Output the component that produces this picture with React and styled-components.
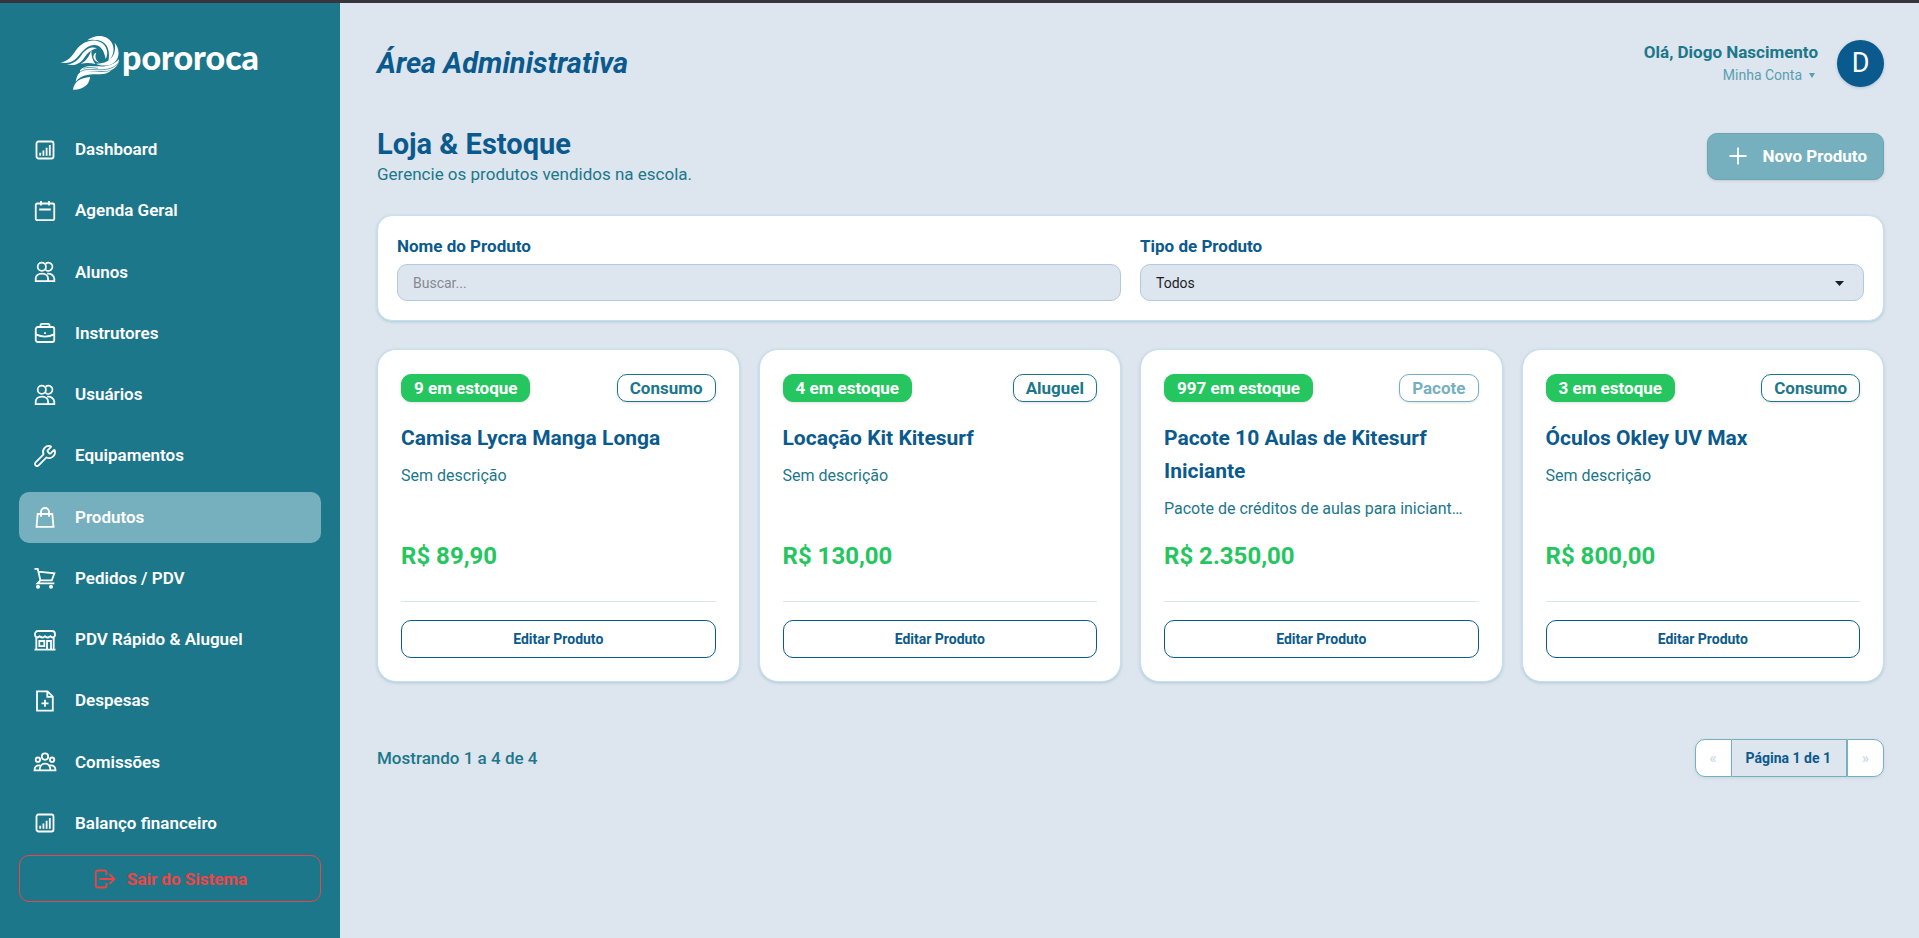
import React, { useState } from "react";
import styled, { createGlobalStyle } from "styled-components";
import { Wrench } from "lucide-react";

const colors = {
  navy: "#0b5a8d",
  teal: "#1c778b",
  aqua: "#76b0bf",
  ice: "#dde5ee",
  line: "#c3e1ee",
  green: "#25c65f",
  red: "#ef4444"
};

const GlobalStyle = createGlobalStyle`
  * {
    box-sizing: border-box;
  }
  body {
    margin: 0;
    background: ${colors.ice};
    font-family: Roboto, "Liberation Sans", sans-serif;
    font-size: 17px;
    line-height: 27px;
    color: ${colors.teal};
  }
  h1, h2, h3, p {
    margin: 0;
  }
  button, input, select {
    font-family: inherit;
  }
`;

const Page = styled.div`
  display: flex;
  min-height: 100vh;
  border-top: 3px solid #37353b;
`;

const Sidebar = styled.aside`
  display: flex;
  flex-direction: column;
  flex: 0 0 340px;
  padding: 32px 19px 36px;
  background: ${colors.teal};
`;

const Brand = styled.a`
  display: flex;
  align-items: flex-start;
  gap: 2px;
  height: 58px;
  margin: 0 38px 31px 41px;
  color: #fff;
  text-decoration: none;
`;

const BrandName = styled.span`
  font-family: Lato, sans-serif;
  font-size: 34px;
  font-weight: 900;
  line-height: 44px;
`;

const Nav = styled.nav`
  display: flex;
  flex: 1;
  flex-direction: column;
  justify-content: space-between;
  margin-bottom: 6px;
`;

const NavLink = styled.a`
  display: flex;
  align-items: center;
  gap: 18px;
  height: 51px;
  padding: 0 14px;
  border-radius: 10px;
  background: ${props => (props.$active ? colors.aqua : "transparent")};
  color: #fff;
  font-weight: 600;
  text-decoration: none;
`;

const LogoutButton = styled.button`
  display: flex;
  align-items: center;
  justify-content: center;
  gap: 10px;
  height: 47px;
  border: 1px solid ${colors.red};
  border-radius: 10px;
  background: transparent;
  color: ${colors.red};
  font-size: 17px;
  font-weight: 700;
`;

const Main = styled.main`
  flex: 1;
  min-width: 0;
  padding: 37px 35px 37px 37px;
`;

const Header = styled.header`
  display: flex;
  align-items: center;
  justify-content: space-between;
  height: 47px;
`;

const AreaTitle = styled.h1`
  color: ${colors.navy};
  font-size: 29px;
  font-style: italic;
  font-weight: 700;
  line-height: 35px;
`;

const Account = styled.div`
  display: flex;
  align-items: center;
  gap: 19px;
`;

const AccountText = styled.div`
  display: flex;
  flex-direction: column;
  align-items: flex-end;
`;

const Greeting = styled.strong`
  font-weight: 700;
  line-height: 24px;
`;

const AccountButton = styled.button`
  display: flex;
  align-items: center;
  gap: 7px;
  padding: 0 3px;
  border: 0;
  background: none;
  color: #5a9fb0;
  font-size: 14px;
  line-height: 23px;
`;

const Avatar = styled.div`
  display: flex;
  align-items: center;
  justify-content: center;
  width: 47px;
  height: 47px;
  border-radius: 50%;
  background: ${colors.navy};
  box-shadow: 0 1px 3px rgba(11, 90, 141, 0.25);
  color: #fff;
  font-size: 27px;
`;

const PageHead = styled.div`
  display: flex;
  align-items: center;
  justify-content: space-between;
  margin: 39px 0 29px;
`;

const PageTitle = styled.h2`
  color: ${colors.navy};
  font-size: 29px;
  font-weight: 700;
  line-height: 37px;
`;

const PageSubtitle = styled.p`
  line-height: 23px;
`;

const NewButton = styled.button`
  display: flex;
  align-items: center;
  gap: 12px;
  height: 47px;
  padding: 0 16px 0 18px;
  border: 1px solid #6ba5b4;
  border-radius: 10px;
  background: ${colors.aqua};
  box-shadow: 0 1px 3px rgba(0, 0, 0, 0.12);
  color: #fff;
  font-size: 17px;
  font-weight: 700;
`;

const Panel = styled.section`
  border: 1px solid ${colors.line};
  background: #fff;
  box-shadow: 0 1px 3px rgba(28, 119, 139, 0.25);
`;

const Filters = styled(Panel)`
  display: grid;
  grid-template-columns: 1fr 1fr;
  gap: 19px;
  padding: 17px 19px 19px;
  border-radius: 15px;
`;

const Field = styled.div`
  position: relative;
`;

const Label = styled.label`
  display: block;
  margin-bottom: 4px;
  color: ${colors.navy};
  font-weight: 700;
`;

const Input = styled.input`
  display: block;
  width: 100%;
  height: 37px;
  padding: 0 15px;
  border: 1px solid #b3cadd;
  border-radius: 10px;
  background: ${colors.ice};
  color: #1d1d26;
  font-size: 14px;
  &::placeholder {
    color: #858a92;
  }
`;

const Select = styled(Input)`
  appearance: none;
`;

const SelectArrow = styled.svg`
  position: absolute;
  right: 20px;
  bottom: 15px;
  pointer-events: none;
`;

const Products = styled.div`
  display: grid;
  grid-template-columns: repeat(4, 1fr);
  gap: 19px;
  margin-top: 28px;
`;

const ProductCard = styled(Panel)`
  display: flex;
  flex-direction: column;
  min-width: 0;
  padding: 24px 23px 23px;
  border-radius: 19px;
`;

const Badges = styled.div`
  display: flex;
  justify-content: space-between;
  margin-bottom: 20px;
`;

const Badge = styled.span`
  height: 28px;
  padding: 0 12px;
  border: 1px solid ${props => props.$color};
  border-radius: 10px;
  background: ${props => (props.$filled ? props.$color : "#fff")};
  box-shadow: 0 1px 3px rgba(0, 0, 0, 0.12);
  color: ${props => (props.$filled ? "#fff" : props.$color)};
  font-weight: 700;
  line-height: 26px;
`;

const ProductName = styled.h3`
  margin-bottom: 7px;
  color: ${colors.navy};
  font-size: 21px;
  font-weight: 700;
  line-height: 33px;
`;

const Description = styled.p`
  margin-bottom: 15px;
  overflow: hidden;
  font-size: 16px;
  text-overflow: ellipsis;
  white-space: nowrap;
`;

const Price = styled.p`
  margin-top: auto;
  margin-bottom: 26px;
  color: ${colors.green};
  font-size: 24px;
  font-weight: 700;
  line-height: 38px;
`;

const CardFooter = styled.div`
  padding-top: 18px;
  border-top: 1px solid #d9e5ef;
`;

const EditButton = styled.button`
  width: 100%;
  height: 38px;
  border: 1px solid ${colors.navy};
  border-radius: 10px;
  background: #fff;
  color: ${colors.navy};
  font-size: 14px;
  font-weight: 700;
`;

const ListFooter = styled.footer`
  display: flex;
  align-items: center;
  justify-content: space-between;
  margin-top: 57px;
`;

const Count = styled.span`
  font-weight: 500;
`;

const Pagination = styled.div`
  display: flex;
  height: 38px;
  border-radius: 10px;
  box-shadow: 0 1px 3px rgba(118, 176, 191, 0.25);
`;

const PageButton = styled.button`
  width: 37px;
  border: 1px solid ${colors.aqua};
  border-radius: ${props => (props.$last ? "0 10px 10px 0" : "10px 0 0 10px")};
  background: #fff;
  color: #c7d9e6;
  font-size: 14px;
  font-weight: 700;
`;

const PageStatus = styled.span`
  padding: 0 15px 0 14px;
  border: 1px solid ${colors.aqua};
  border-left: 0;
  color: ${colors.navy};
  font-size: 14px;
  font-weight: 700;
  line-height: 36px;
`;

const Icon = ({ children }) => (
  <svg
    width="24"
    height="24"
    viewBox="0 0 24 24"
    fill="none"
    stroke="currentColor"
    strokeWidth="1.8"
    aria-hidden="true"
  >
    {children}
  </svg>
);

const ChartIcon = () => (
  <Icon>
    <rect x="3.5" y="3.5" width="17" height="17" rx="2" />
    <path d="M7.2 14.8v3M10.4 12.4v5.4M13.6 9.8v8M16.8 7v10.8" />
  </Icon>
);

const CalendarIcon = () => (
  <Icon>
    <rect x="2.75" y="4.5" width="18.5" height="16.7" rx="1.5" />
    <path d="M8 2v4.5M16 2v4.5M6.2 10.5h11.6" />
  </Icon>
);

const UsersIcon = () => (
  <Icon>
    <circle cx="8.8" cy="6.8" r="4.1" />
    <path d="M12.6 3.7a4.1 4.1 0 1 1 0 6.2M2.7 21.2v-2.4c0-3.3 2.8-5.2 6.2-5.2s6.2 1.9 6.2 5.2v2.4zM14.2 13.7c4 -.3 7.1 1.8 7.1 5.1v2.4h-6.2" />
  </Icon>
);

const BriefcaseIcon = () => (
  <Icon>
    <rect x="2.75" y="6" width="18.5" height="15" rx="2" />
    <path d="M7.5 6V4.2A1.4 1.4 0 0 1 9 2.8h6a1.4 1.4 0 0 1 1.5 1.4V6M2.8 13.4c5.5 2.6 12.9 2.6 18.4 0M12 11.3v1.8" />
  </Icon>
);

const BagIcon = () => (
  <Icon>
    <path d="M4.7 9h14.600l1.200 12.800H3.500zM8 11.800V7a4 4 0 0 1 8 0v4.800" />
  </Icon>
);

const CartIcon = () => (
  <Icon>
    <path d="M1.5 2.9h3.200L7.4 14.3h11.400L21.4 7.3 5.3 5.6M7.4 14.3l-2.900 3.100h16.800" />
    <circle cx="5" cy="20.7" r="1.1" fill="currentColor" />
    <circle cx="18" cy="20.7" r="1.1" fill="currentColor" />
  </Icon>
);

const StoreIcon = () => (
  <Icon>
    <path d="M5 3h14c1.800 0 3 1.600 3 3.300 0 1.800-.7 3.200-2 3.200-1.300 0-2-.8-2.700-1.300-.7.500-1.400 1.300-2.600 1.300S12.700 8.700 12 8.200c-.7.500-1.500 1.300-2.700 1.300S7.400 8.700 6.700 8.200C6 8.700 5.300 9.500 4 9.500c-1.300 0-2-1.400-2-3.200C2 4.600 3.200 3 5 3zM1.500 21.600h21M3.300 9.800v11.800M20.700 9.800v11.800M6.300 13h5v5.200h-5zM14 21.600V13h4v8.600" />
  </Icon>
);

const FilePlusIcon = () => (
  <Icon>
    <path d="M4 2.300h10.500l5.300 5.400v14H4zM14.300 2.500v5.300h5.300M12 10.800v7M8.500 14.300h7" />
  </Icon>
);

const TeamIcon = () => (
  <Icon>
    <circle cx="12" cy="6.6" r="3.2" />
    <circle cx="4.9" cy="9.7" r="2.2" />
    <circle cx="19.1" cy="9.7" r="2.2" />
    <path d="M6.600 20.400c0-4.200 1.900-6.700 5.400-6.700s5.400 2.500 5.400 6.700zM6.600 20.400H1.500c0-3.300 1.500-5.200 5.600-4.900M17.400 20.400h5.100c0-3.300-1.500-5.200-5.600-4.900" />
  </Icon>
);

const LogoutIcon = () => (
  <Icon>
    <path d="M13.500 8V5.500a2 2 0 0 0-2-2H4.800a2 2 0 0 0-2 2v13a2 2 0 0 0 2 2h6.700a2 2 0 0 0 2-2V16M6.500 12h14.800M16.500 7.200l4.900 4.800-4.900 4.800" />
  </Icon>
);

const WaveLogo = () => (
  <svg width="60" height="56" viewBox="180 105 180 168" aria-hidden="true">
    <g fill="#fff">
      <path d="M262 121c16-13 39-18 58-8 25 13 28 49 5 71 6-32-2-56-30-63-11-2-22-2-33 0z" />
      <path d="M181 187c24-3 33-17 46-35 20-28 51-37 75-25 21 11 24 36 15 50-5-27-16-42-34-42-29 0-40 30-60 45-12 9-27 11-42 7z" />
      <path d="M199 193c23-1 35-13 46-29 13-18 30-26 46-19-16 3-28 14-38 28-13 19-31 26-54 20z" />
      <path d="M242 191c14-6 25-19 32-41 0 17 3 31 12 42-14-4-29-4-44-1z" />
      <path d="M289 158c-6 12-1 25 10 30-14-2-22-14-18-23 2-4 4-6 8-7z" />
      <path d="M344 128c18 22 15 52-8 64-16 8-36 5-49-1 24 1 43-7 53-25 6-13 6-25 4-38z" />
      <path d="M240 211c13-16 33-14 53-12 25 2 47-2 64-22-1 25-20 37-49 37-25 0-47-2-68 8 0-4 0-8 0-11z" />
      <path d="M227 245c2-12 5-20 11-27 20-7 43-3 67-2 12 0 22-2 30-6-11 12-28 13-46 13-26 0-46 3-62 22z" />
      <path d="M219 269c3-24 22-36 51-38-1 22-21 39-51 38z" />
    </g>
    <path
      d="M236 218c16-12 34-10 54-9 26 1 46-1 64-18M250 205c12-5 28-2 44 0"
      fill="none"
      stroke="#1c778b"
      strokeWidth="2"
    />
  </svg>
);

const menu = [
  { label: "Dashboard", icon: <ChartIcon /> },
  { label: "Agenda Geral", icon: <CalendarIcon /> },
  { label: "Alunos", icon: <UsersIcon /> },
  { label: "Instrutores", icon: <BriefcaseIcon /> },
  { label: "Usuários", icon: <UsersIcon /> },
  { label: "Equipamentos", icon: <Wrench size={24} strokeWidth={1.8} /> },
  { label: "Produtos", icon: <BagIcon />, active: true },
  { label: "Pedidos / PDV", icon: <CartIcon /> },
  { label: "PDV Rápido & Aluguel", icon: <StoreIcon /> },
  { label: "Despesas", icon: <FilePlusIcon /> },
  { label: "Comissões", icon: <TeamIcon /> },
  { label: "Balanço financeiro", icon: <ChartIcon /> }
];

const products = [
  {
    name: "Camisa Lycra Manga Longa",
    stock: 9,
    type: "Consumo",
    description: "Sem descrição",
    price: "89,90"
  },
  {
    name: "Locação Kit Kitesurf",
    stock: 4,
    type: "Aluguel",
    description: "Sem descrição",
    price: "130,00"
  },
  {
    name: "Pacote 10 Aulas de Kitesurf Iniciante",
    stock: 997,
    type: "Pacote",
    description: "Pacote de créditos de aulas para iniciant…",
    price: "2.350,00"
  },
  {
    name: "Óculos Okley UV Max",
    stock: 3,
    type: "Consumo",
    description: "Sem descrição",
    price: "800,00"
  }
];

const App = () => {
  const [search, setSearch] = useState("");
  const [type, setType] = useState("Todos");

  const visible = products.filter(
    product =>
      product.name.toLowerCase().includes(search.toLowerCase()) &&
      (type === "Todos" || product.type === type)
  );

  return (
    <Page>
      <GlobalStyle />
      <Sidebar>
        <Brand href="#">
          <WaveLogo />
          <BrandName>pororoca</BrandName>
        </Brand>
        <Nav>
          {menu.map(item => (
            <NavLink href="#" key={item.label} $active={item.active}>
              {item.icon}
              {item.label}
            </NavLink>
          ))}
        </Nav>
        <LogoutButton type="button">
          <LogoutIcon />
          Sair do Sistema
        </LogoutButton>
      </Sidebar>

      <Main>
        <Header>
          <AreaTitle>Área Administrativa</AreaTitle>
          <Account>
            <AccountText>
              <Greeting>Olá, Diogo Nascimento</Greeting>
              <AccountButton type="button">
                Minha Conta
                <svg width="6" height="5" viewBox="0 0 6 5" aria-hidden="true">
                  <path d="M0 0h6L3 5z" fill="currentColor" />
                </svg>
              </AccountButton>
            </AccountText>
            <Avatar>D</Avatar>
          </Account>
        </Header>

        <PageHead>
          <div>
            <PageTitle>Loja & Estoque</PageTitle>
            <PageSubtitle>Gerencie os produtos vendidos na escola.</PageSubtitle>
          </div>
          <NewButton type="button">
            <Icon>
              <path d="M12 3.5v17M3.5 12h17" />
            </Icon>
            Novo Produto
          </NewButton>
        </PageHead>

        <Filters>
          <Field>
            <Label htmlFor="nome">Nome do Produto</Label>
            <Input
              id="nome"
              type="text"
              placeholder="Buscar..."
              value={search}
              onChange={event => setSearch(event.target.value)}
            />
          </Field>
          <Field>
            <Label htmlFor="tipo">Tipo de Produto</Label>
            <Select
              as="select"
              id="tipo"
              value={type}
              onChange={event => setType(event.target.value)}
            >
              <option>Todos</option>
              <option>Consumo</option>
              <option>Aluguel</option>
              <option>Pacote</option>
            </Select>
            <SelectArrow width="9" height="5" viewBox="0 0 9 5">
              <path d="M0 0h9L4.5 5z" fill="#1d1d26" />
            </SelectArrow>
          </Field>
        </Filters>

        <Products>
          {visible.map(product => (
            <ProductCard as="article" key={product.name}>
              <Badges>
                <Badge $filled $color={colors.green}>
                  {product.stock} em estoque
                </Badge>
                <Badge
                  $color={product.type === "Pacote" ? colors.aqua : colors.teal}
                >
                  {product.type}
                </Badge>
              </Badges>
              <ProductName>{product.name}</ProductName>
              <Description>{product.description}</Description>
              <Price>R$ {product.price}</Price>
              <CardFooter>
                <EditButton type="button">Editar Produto</EditButton>
              </CardFooter>
            </ProductCard>
          ))}
        </Products>

        <ListFooter>
          <Count>
            Mostrando 1 a {visible.length} de {visible.length}
          </Count>
          <Pagination>
            <PageButton type="button" aria-label="Anterior" disabled>
              «
            </PageButton>
            <PageStatus>Página 1 de 1</PageStatus>
            <PageButton type="button" aria-label="Próxima" $last disabled>
              »
            </PageButton>
          </Pagination>
        </ListFooter>
      </Main>
    </Page>
  );
};

export default App;
